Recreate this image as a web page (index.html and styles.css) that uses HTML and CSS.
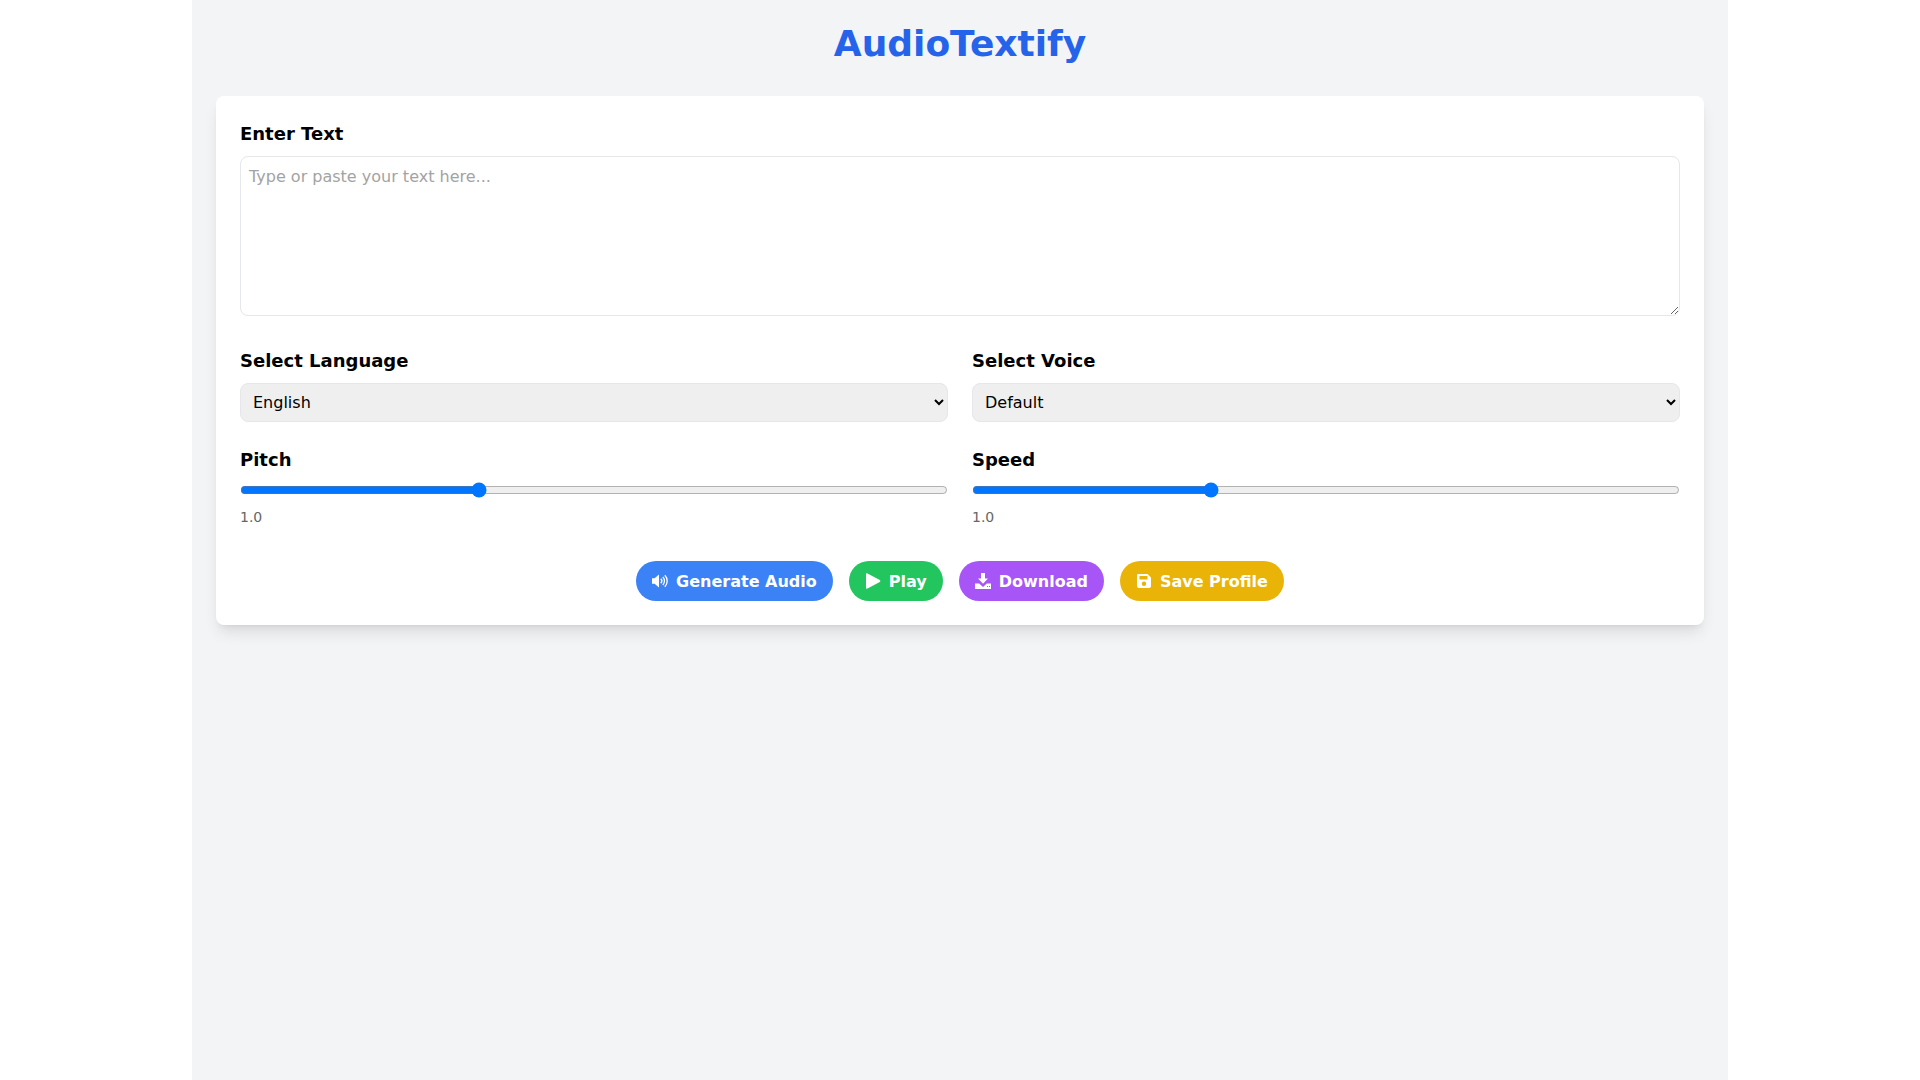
FILE: index.html
```html
<!DOCTYPE html>
<html lang="en">
<head>
    <meta charset="UTF-8">
    <meta name="viewport" content="width=device-width, initial-scale=1.0">
    <title>AudioTextify</title>
    <link rel="stylesheet" href="styles.css">
</head>
<body>
    <div class="container">
        <h1 class="title">AudioTextify</h1>
        <div class="card">
            <div class="field">
                <label class="label" for="text">Enter Text</label>
                <textarea id="text" class="textarea" placeholder="Type or paste your text here..."></textarea>
            </div>
            <div class="grid">
                <div>
                    <label class="label" for="language">Select Language</label>
                    <select id="language" class="select">
                        <option>English</option>
                    </select>
                </div>
                <div>
                    <label class="label" for="voice">Select Voice</label>
                    <select id="voice" class="select">
                        <option>Default</option>
                    </select>
                </div>
                <div>
                    <label class="label" for="pitch">Pitch</label>
                    <input id="pitch" class="range" type="range" min="0" max="3" step="0.1" value="1">
                    <span class="value">1.0</span>
                </div>
                <div>
                    <label class="label" for="speed">Speed</label>
                    <input id="speed" class="range" type="range" min="0" max="3" step="0.1" value="1">
                    <span class="value">1.0</span>
                </div>
            </div>
            <div class="buttons">
                <button class="btn blue">
                    <svg class="icon" viewBox="0 0 16 16"><path d="M0 5.2h2.6L7 1.6v12.8L2.6 10.8H0z"/><path class="wave" d="M8.8 5.8c1.2 1.2 1.2 3.2 0 4.4M10.8 4c2.2 2.2 2.2 5.8 0 8M12.8 2.2c3.2 3.2 3.2 8.400 0 11.600"/></svg>
                    Generate Audio
                </button>
                <button class="btn green">
                    <svg class="icon" viewBox="0 0 16 16"><path d="M1 1.200C1 .4 1.800 0 2.500.4l12.300 6.700c.7.4.7 1.400 0 1.800L2.500 15.600C1.800 16 1 15.600 1 14.800z"/></svg>
                    Play
                </button>
                <button class="btn purple">
                    <svg class="icon" viewBox="0 0 16 16"><path d="M6 0h4v5.500h3L8 10.800 3 5.500h3z"/><path fill-rule="evenodd" d="M0 10.500h4.200L8 14l3.800-3.500H16V16H0zM12 13v1h1v-1zm2 0v1h1v-1z"/></svg>
                    Download
                </button>
                <button class="btn yellow">
                    <svg class="icon" viewBox="0 0 16 16"><path fill-rule="evenodd" d="M2 1h9.500L15 4.500V13a2 2 0 0 1-2 2H3a2 2 0 0 1-2-2V2a1 1 0 0 1 1-1zm1.500 2v3.500h8V3zM8 8.600a2.200 2.200 0 1 0 0 4.400 2.200 2.200 0 0 0 0-4.400z"/></svg>
                    Save Profile
                </button>
            </div>
        </div>
    </div>
</body>
</html>
```

FILE: styles.css
```css
* {
    box-sizing: border-box;
}
body {
    margin: 0;
    background-color: #fff;
    font-family: "DejaVu Sans", sans-serif;
    line-height: 1.5;
}
.container {
    width: 1536px;
    min-height: 1080px;
    margin: 0 auto;
    padding: 24px;
    background-color: #f3f4f6;
}
.title {
    margin: 0 0 32px;
    font-size: 36px;
    line-height: 40px;
    font-weight: 700;
    color: #2563eb;
    text-align: center;
}
.card {
    padding: 24px;
    background-color: #fff;
    border-radius: 8px;
    box-shadow: 0 10px 15px -3px rgba(0, 0, 0, 0.1), 0 4px 6px -4px rgba(0, 0, 0, 0.1);
}
.field {
    margin-bottom: 24px;
}
.label {
    display: block;
    margin-bottom: 8px;
    font-size: 18px;
    line-height: 28px;
    font-weight: 600;
    color: #000;
}
.textarea {
    width: 100%;
    height: 160px;
    padding: 8px;
    border: 1px solid #e5e7eb;
    border-radius: 8px;
    font-family: inherit;
    font-size: 16px;
    line-height: 24px;
    color: #000;
}
.textarea::placeholder {
    color: #a3a3a3;
}
.grid {
    display: grid;
    grid-template-columns: 1fr 1fr;
    column-gap: 24px;
    row-gap: 24px;
}
.select {
    display: block;
    width: 100%;
    height: 39px;
    padding: 8px;
    border: 1px solid #e5e7eb;
    border-radius: 8px;
    background-color: #efefef;
    font-family: inherit;
    font-size: 16px;
    color: #000;
}
.range {
    display: block;
    width: 100%;
    margin: 2px 0 0;
    accent-color: #0075ff;
}
.value {
    display: block;
    margin-top: 9px;
    font-size: 14px;
    line-height: 20px;
    color: #666;
}
.buttons {
    display: flex;
    justify-content: center;
    gap: 16px;
    margin-top: 34px;
}
.btn {
    display: flex;
    align-items: center;
    gap: 8px;
    height: 40px;
    padding: 0 16px;
    border: none;
    border-radius: 9999px;
    font-family: inherit;
    font-size: 16px;
    font-weight: 600;
    color: #fff;
}
.blue {
    background-color: #3b82f6;
}
.green {
    background-color: #22c55e;
}
.purple {
    background-color: #a855f7;
}
.yellow {
    background-color: #eab308;
}
.icon {
    width: 16px;
    height: 16px;
    fill: #fff;
}
.wave {
    fill: none;
    stroke: #fff;
    stroke-width: 1.3;
}
```
